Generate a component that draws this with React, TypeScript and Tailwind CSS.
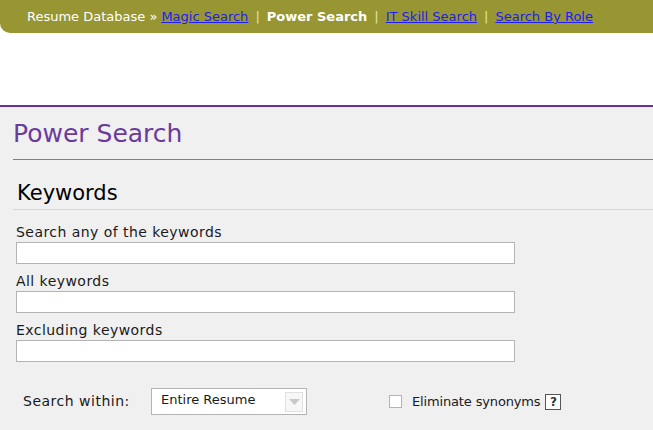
const verdana = { fontFamily: '"DejaVu Sans", Verdana, sans-serif' };

const Field = ({ label }: { label: string }) => (
  <div className="flex flex-col">
    <label className="text-[14px] leading-[17px] tracking-[0.45px] text-[#1a1a1a]">{label}</label>
    <input
      type="text"
      className="mt-[1px] h-[22px] w-[499px] border border-[#b4b4b4] bg-white outline-none"
    />
  </div>
);

export default function App() {
  return (
    <div className="min-h-[430px] w-full bg-[#f0f0f0] font-['DejaVu_Sans',Verdana,sans-serif]">
      <div className="bg-white">
        <div className="flex h-[33px] items-center rounded-bl-[10px] bg-[#979632] pl-[27px] text-[13px] text-white">
          <span>Resume Database »</span>
          <a href="#" className="ml-[4px] text-[#2020ee] underline">
            Magic Search
          </a>
          <span className="mx-[7px] text-[#e8e2a8]">|</span>
          <span className="font-bold">Power Search</span>
          <span className="mx-[7px] text-[#e8e2a8]">|</span>
          <a href="#" className="text-[#2020ee] underline">
            IT Skill Search
          </a>
          <span className="mx-[7px] text-[#e8e2a8]">|</span>
          <a href="#" className="text-[#2020ee] underline">
            Search By Role
          </a>
        </div>
        <div className="h-[72px]" />
      </div>
      <div className="border-t-2 border-[#663399] pl-[13px]">
        <h1 className="pt-[13px] pb-[11px] text-[25px] leading-[28px] text-[#6b3b9c]">
          Power Search
        </h1>
        <div className="border-t border-[#9e6aa6]" />
        <h2 className="pt-[20px] pl-[4px] pb-[3px] text-[21px] leading-[26px] text-black">
          Keywords
        </h2>
        <div className="border-t border-[#d6d6d6]" />
        <div className="mt-[14px] flex flex-col gap-[9px] pl-[3px]">
          <Field label="Search any of the keywords" />
          <Field label="All keywords" />
          <Field label="Excluding keywords" />
        </div>
        <div className="mt-[26px] flex items-center text-[14px] text-[#1a1a1a]" style={verdana}>
          <span className="ml-[10px] w-[128px] tracking-[0.5px]">Search within:</span>
          <div className="flex h-[27px] w-[156px] items-center justify-between border border-[#b4b4b4] bg-white pl-[9px] pr-[3px] text-[13px]">
            <span className="-mt-[3px]">Entire Resume</span>
            <div className="flex h-[20px] w-[18px] items-center justify-center border border-[#e0e0e0] bg-[#f7f7f7]">
              <svg width="11" height="6" viewBox="0 0 11 6">
                <path d="M0 0 L11 0 L5.5 6 Z" fill="#c8c8c8" />
              </svg>
            </div>
          </div>
          <div className="ml-[82px] h-[13px] w-[13px] border border-[#b4b4b4] bg-white" />
          <span className="ml-[10px] text-[13px] tracking-[-0.15px]">Eliminate synonyms</span>
          <span className="ml-[5px] flex h-[16px] w-[16px] items-center justify-center border border-[#555] bg-white text-[12px] font-bold leading-none text-[#333]">
            ?
          </span>
        </div>
      </div>
    </div>
  );
}
